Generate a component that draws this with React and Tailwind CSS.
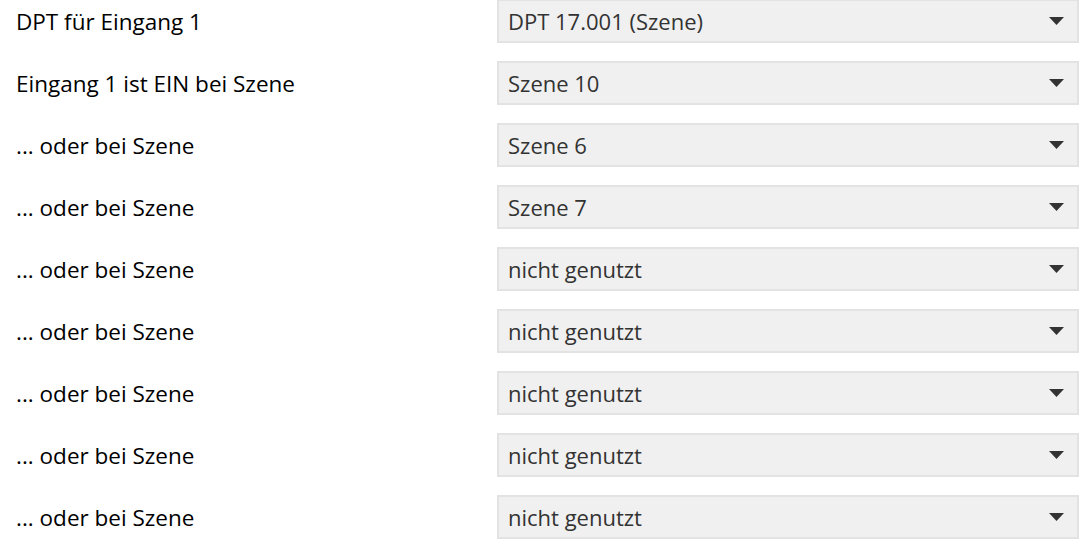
const ROWS = [
  { label: 'DPT für Eingang 1', value: 'DPT 17.001 (Szene)' },
  { label: 'Eingang 1 ist EIN bei Szene', value: 'Szene 10' },
  { label: '... oder bei Szene', value: 'Szene 6' },
  { label: '... oder bei Szene', value: 'Szene 7' },
  { label: '... oder bei Szene', value: 'nicht genutzt' },
  { label: '... oder bei Szene', value: 'nicht genutzt' },
  { label: '... oder bei Szene', value: 'nicht genutzt' },
  { label: '... oder bei Szene', value: 'nicht genutzt' },
  { label: '... oder bei Szene', value: 'nicht genutzt' },
]

function Select({ value }) {
  return (
    <div className="flex h-[44px] w-[582px] items-center justify-between border-2 border-[#e3e3e3] bg-[#f0f0f0] pl-[9px] pr-[13px] text-[22px] text-[#333333]">
      <span className="pt-px">{value}</span>
      <svg width="15" height="8" viewBox="0 0 15 8">
        <path d="M0 0 H15 L7.5 8 Z" fill="#333333" />
      </svg>
    </div>
  )
}

export default function App() {
  return (
    <div
      className="h-[552px] w-[1086px] overflow-hidden bg-white pt-px text-black"
      style={{ fontFamily: '"Open Sans", "Noto Sans", sans-serif' }}
    >
      <div className="-mt-[2px] flex flex-col gap-[18px]">
        {ROWS.map((row, i) => (
          <div key={i} className="flex items-center">
            <div className="w-[497px] pl-4 pt-px text-[22.5px]">{row.label}</div>
            <Select value={row.value} />
          </div>
        ))}
      </div>
    </div>
  )
}
